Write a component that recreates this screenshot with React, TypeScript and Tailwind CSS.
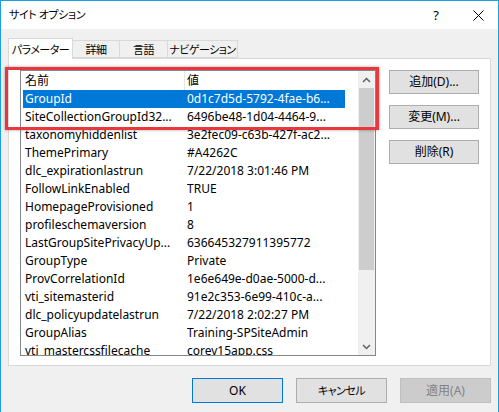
import React from "react";

const rows: [string, string][] = [
  ["GroupId", "0d1c7d5d-5792-4fae-b6..."],
  ["SiteCollectionGroupId32...", "6496be48-1d04-4464-9..."],
  ["taxonomyhiddenlist", "3e2fec09-c63b-427f-ac2..."],
  ["ThemePrimary", "#A4262C"],
  ["dlc_expirationlastrun", "7/22/2018 3:01:46 PM"],
  ["FollowLinkEnabled", "TRUE"],
  ["HomepageProvisioned", "1"],
  ["profileschemaversion", "8"],
  ["LastGroupSitePrivacyUp...", "636645327911395772"],
  ["GroupType", "Private"],
  ["ProvCorrelationId", "1e6e649e-d0ae-5000-d..."],
  ["vti_sitemasterid", "91e2c353-6e99-410c-a..."],
  ["dlc_policyupdatelastrun", "7/22/2018 2:02:27 PM"],
  ["GroupAlias", "Training-SPSiteAdmin"],
  ["vti_mastercssfilecache", "corev15app.css"],
];

const font = "font-['Noto_Sans','Noto_Sans_CJK_JP',sans-serif] [font-feature-settings:'palt']";

function SideButton({ label }: { label: string }) {
  return (
    <div className="flex h-[24px] w-[90px] items-center justify-center whitespace-nowrap border border-[#adadad] bg-[#e1e1e1] text-[12px] text-black">
      {label}
    </div>
  );
}

export default function App() {
  return (
    <div
      className={`relative flex h-[412px] w-[499px] flex-col overflow-hidden border-x border-t border-[#1ba1e2] bg-[#f0f0f0] ${font} text-[12px] leading-none text-black`}
    >
      {/* title bar */}
      <div className="flex h-[28px] shrink-0 items-center bg-white pl-[8px]">
        <span className="flex-1 whitespace-nowrap pb-[1px] text-[11px] tracking-[-0.4px]">サイト オプション</span>
        <span className="w-[20px] text-center text-[13px]">?</span>
        <svg className="ml-[27px] mr-[14px]" width="11" height="11" viewBox="0 0 11 11">
          <path d="M0.5 0.5 L10.5 10.5 M10.5 0.5 L0.5 10.5" stroke="#000" strokeWidth="1" />
        </svg>
      </div>

      {/* tabs */}
      <div className="mt-[9px] flex items-end whitespace-nowrap pl-[7px] text-[11px] tracking-[-0.5px]">
        <div className="relative z-10 -mb-px flex h-[21px] w-[65px] items-center justify-center border border-b-0 border-[#d9d9d9] bg-white">
          パラメーター
        </div>
        <div className="flex h-[18px] w-[47px] items-center justify-center border border-l-0 border-[#d9d9d9] bg-[#f0f0f0]">
          詳細
        </div>
        <div className="flex h-[18px] w-[48px] items-center justify-center border border-l-0 border-[#d9d9d9] bg-[#f0f0f0]">
          言語
        </div>
        <div className="flex h-[18px] w-[70px] items-center justify-center border border-l-0 border-[#d9d9d9] bg-[#f0f0f0]">
          ナビゲーション
        </div>
      </div>

      {/* tab panel */}
      <div className="mx-[7px] flex h-[308px] gap-[13px] border border-[#d9d9d9] bg-white p-[11px]">
        {/* list view */}
        <div className="flex h-[286px] w-[357px] border border-[#828790]">
          <div className="flex flex-1 flex-col overflow-hidden">
            <div className="flex h-[19px] shrink-0 items-center">
              <div className="flex h-full w-[164px] items-center border-r border-[#e5e5e5] pl-[4px]">名前</div>
              <div className="pl-[2px]">値</div>
            </div>
            {rows.map(([name, value], i) => (
              <div
                key={name}
                className={`ml-[2px] flex h-[18px] w-[322px] shrink-0 items-center ${
                  i === 0 ? "bg-[#0078d7] text-white" : ""
                }`}
              >
                <div className="w-[162px] whitespace-nowrap pl-[2px]">{name}</div>
                <div className="whitespace-nowrap pl-[2px]">{value}</div>
              </div>
            ))}
          </div>
          {/* scrollbar */}
          <div className="flex w-[17px] flex-col bg-[#f0f0f0]">
            <div className="flex h-[17px] items-center justify-center">
              <svg width="9" height="6" viewBox="0 0 9 6">
                <path d="M1 5 L4.5 1.5 L8 5" fill="none" stroke="#606060" strokeWidth="1.5" />
              </svg>
            </div>
            <div className="mx-px h-[182px] bg-[#cdcdcd]" />
            <div className="flex-1" />
            <div className="flex h-[17px] items-center justify-center">
              <svg width="9" height="6" viewBox="0 0 9 6">
                <path d="M1 1 L4.5 4.5 L8 1" fill="none" stroke="#606060" strokeWidth="1.5" />
              </svg>
            </div>
          </div>
        </div>

        {/* side buttons */}
        <div className="flex flex-col gap-[11px]">
          <SideButton label="追加(D)..." />
          <SideButton label="変更(M)..." />
          <SideButton label="削除(R)" />
        </div>
      </div>

      {/* dialog buttons */}
      <div className="mt-[12px] flex justify-end gap-[13px] whitespace-nowrap pr-[7px]">
        <div className="flex h-[25px] w-[91px] items-center justify-center border border-[#0078d7] bg-[#e1e1e1]">
          OK
        </div>
        <div className="flex h-[25px] w-[91px] items-center justify-center border border-[#adadad] bg-[#e1e1e1] text-[11px] tracking-[-0.5px]">
          キャンセル
        </div>
        <div className="flex h-[25px] w-[91px] items-center justify-center border border-[#bfbfbf] bg-[#cccccc] text-[#838383]">
          適用(A)
        </div>
      </div>

      {/* highlight frame */}
      <div className="absolute left-[4px] top-[66px] h-[63px] w-[374px] border-[3px] border-[#e8383d] shadow-[0_0_3px_rgba(0,0,0,0.35)]" />
    </div>
  );
}
